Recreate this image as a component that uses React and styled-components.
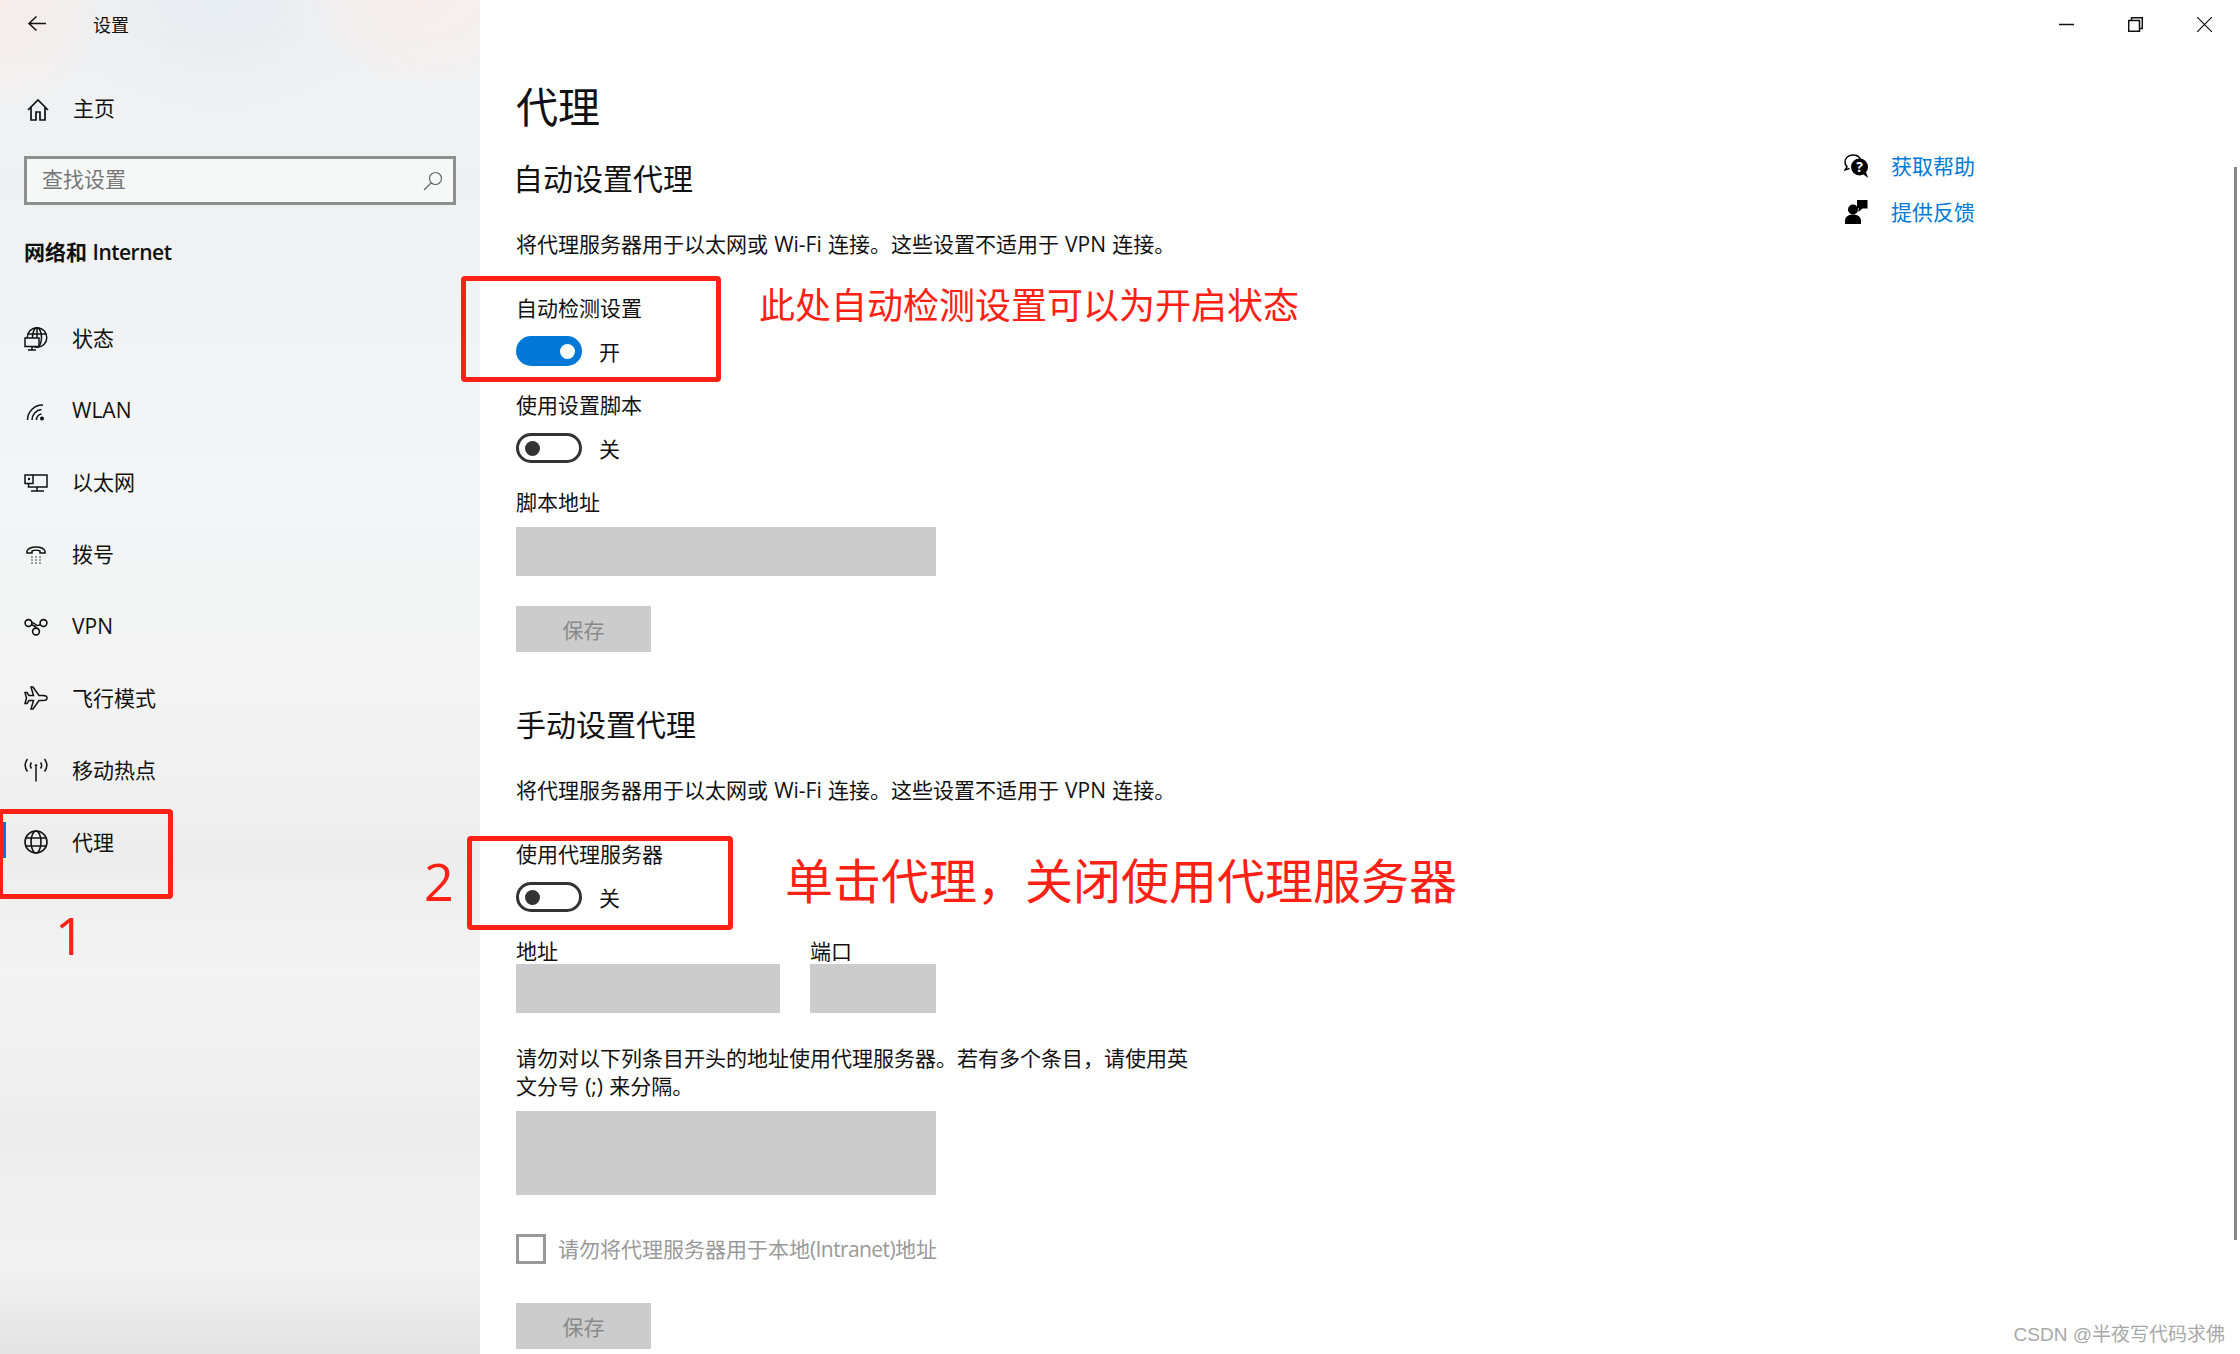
import styled, { createGlobalStyle } from "styled-components";

const GlobalStyle = createGlobalStyle`
  html, body {
    margin: 0;
    padding: 0;
    background: #fff;
  }
  * {
    box-sizing: border-box;
  }
  body {
    font-family: "Open Sans", "Noto Sans CJK SC", sans-serif;
    color: #111;
  }
`;

const Page = styled.div`
  position: relative;
  display: flex;
  width: 2240px;
  height: 1354px;
  overflow: hidden;
`;

const Sidebar = styled.aside`
  width: 480px;
  flex-shrink: 0;
  background:
    radial-gradient(130px 110px at 0 0, rgba(250, 232, 226, 0.55), transparent),
    radial-gradient(140px 90px at 420px 0, rgba(252, 232, 226, 0.5), transparent),
    radial-gradient(220px 130px at 220px 0, rgba(226, 234, 240, 0.6), transparent),
    linear-gradient(
      #f1f2f3 0,
      #eff0f1 190px,
      #f4f5f6 480px,
      #f3f3f3 700px,
      #ededed 860px,
      #f3f3f3 970px,
      #ededed 1130px,
      #f1f1f1 1270px,
      #e3e3e3 1354px
    );
`;

const Lifted = styled.span`
  margin-top: -${(p) => p.$by}px;
`;

const TitleBar = styled.div`
  display: flex;
  align-items: center;
  height: 48px;
  padding-left: 27px;
  font-size: 18px;
  svg {
    margin-right: 46px;
  }
`;

const HomeRow = styled.div`
  display: flex;
  align-items: center;
  height: 48px;
  margin-top: 38px;
  padding-left: 27px;
  font-size: 21px;
  svg {
    margin-right: 24px;
  }
`;

const SearchBox = styled.div`
  display: flex;
  align-items: center;
  justify-content: space-between;
  width: 432px;
  height: 49px;
  margin: 22px 0 0 24px;
  padding: 0 10px 0 15px;
  border: 3px solid #8f8f8f;
  background: rgba(255, 255, 255, 0.45);
  font-size: 21px;
  color: #777;
`;

const GroupTitle = styled.div`
  height: 30px;
  margin: 32px 0 36px 24px;
  font-size: 21px;
  line-height: 30px;
  font-weight: 700;
`;

const LatinWord = styled.span`
  font-weight: ${(p) => p.$weight || 400};
  letter-spacing: ${(p) => p.$track}px;
`;

const NavList = styled.nav`
  display: flex;
  flex-direction: column;
`;

const NavRow = styled.div`
  position: relative;
  display: flex;
  align-items: center;
  height: 71.9px;
  font-size: 21px;
  &::before {
    content: "";
    display: ${(p) => (p.$active ? "block" : "none")};
    position: absolute;
    left: 3px;
    top: 16px;
    width: 3px;
    height: 36px;
    background: #0078d7;
  }
`;

const NavIcon = styled.span`
  display: flex;
  justify-content: center;
  width: 24px;
  margin: 0 24px;
`;

const Main = styled.main`
  flex: 1;
  display: flex;
  flex-direction: column;
  background: #fff;
`;

const WindowBar = styled.div`
  display: flex;
  align-items: center;
  justify-content: flex-end;
  gap: 54px;
  height: 48px;
  padding-right: 28px;
`;

const Body = styled.div`
  display: flex;
  padding-left: 36px;
`;

const Content = styled.div`
  width: 1328px;
`;

const PageTitle = styled.h1`
  margin: 31px 0 0;
  font-size: 42px;
  line-height: 56px;
  font-weight: 400;
`;

const SectionTitle = styled.h2`
  margin: ${(p) => p.$top}px 0 0 ${(p) => p.$left || 0}px;
  font-size: 30px;
  line-height: 40px;
  font-weight: 400;
`;

const Text = styled.p`
  margin: ${(p) => p.$top}px 0 0;
  width: 685px;
  font-size: 21px;
  line-height: 28px;
  word-spacing: 0.7px;
`;

const ToggleRow = styled.div`
  display: flex;
  align-items: center;
  gap: 17px;
  height: 30px;
  margin-top: ${(p) => p.$top}px;
  font-size: 21px;
`;

const Toggle = styled.span`
  display: flex;
  align-items: center;
  justify-content: ${(p) => (p.$on ? "flex-end" : "flex-start")};
  width: 66px;
  height: 30px;
  padding: 0 ${(p) => (p.$on ? 7 : 6)}px;
  border: ${(p) => (p.$on ? "0" : "3px solid #333")};
  border-radius: 15px;
  background: ${(p) => (p.$on ? "#0078d7" : "#fff")};
`;

const Thumb = styled.span`
  width: 15px;
  height: 15px;
  border-radius: 50%;
  background: ${(p) => (p.$on ? "#fff" : "#333")};
`;

const Input = styled.div`
  width: ${(p) => p.$w}px;
  height: ${(p) => p.$h}px;
  margin-top: ${(p) => p.$top}px;
  background: #ccc;
`;

const SaveButton = styled.button`
  display: block;
  width: 135px;
  height: 46px;
  margin-top: ${(p) => p.$top}px;
  padding: 0;
  border: 0;
  background: #ccc;
  color: #8a8a8a;
  font: inherit;
  font-size: 21px;
`;

const FieldRow = styled.div`
  display: flex;
  gap: 30px;
  margin-top: 27px;
`;

const FieldLabel = styled.div`
  padding-bottom: 1px;
  font-size: 21px;
  line-height: 24px;
`;

const CheckRow = styled.div`
  display: flex;
  align-items: center;
  gap: 12px;
  height: 30px;
  margin-top: 39px;
  font-size: 21px;
  color: #999;
`;

const CheckBox = styled.span`
  width: 30px;
  height: 30px;
  border: 3px solid #999;
`;

const HelpLinks = styled.div`
  display: flex;
  flex-direction: column;
  margin-top: 95px;
`;

const HelpRow = styled.a`
  display: flex;
  align-items: center;
  height: 46px;
  font-size: 21px;
  color: #0078d7;
  svg {
    width: 24px;
    margin-right: 23px;
  }
`;

const RedBox = styled.div`
  position: absolute;
  left: ${(p) => p.$x}px;
  top: ${(p) => p.$y}px;
  width: ${(p) => p.$w}px;
  height: ${(p) => p.$h}px;
  border: 5px solid #ff2113;
  border-radius: 4px;
`;

const Note = styled.div`
  position: absolute;
  left: ${(p) => p.$x}px;
  top: ${(p) => p.$y}px;
  font-size: ${(p) => p.$size}px;
  line-height: 60px;
  color: #ff2113;
  white-space: nowrap;
`;

const ScrollThumb = styled.div`
  position: absolute;
  right: 3px;
  top: 167px;
  width: 3px;
  height: 1073px;
  background: #868686;
`;

const Watermark = styled.div`
  position: absolute;
  right: 15px;
  top: 1321px;
  font-family: "Liberation Sans", "Noto Sans CJK SC", sans-serif;
  font-size: 19px;
  line-height: 28px;
  color: #a8a8a8;
`;

const line = { fill: "none", stroke: "#111", strokeWidth: 1.5 };

const BackIcon = () => (
  <svg width="20" height="18" viewBox="0 0 20 18" {...line}>
    <path d="M19 8.500H2M9.500 1.500 2 8.500l7.500 7" />
  </svg>
);

const HomeIcon = () => (
  <svg width="22" height="22" viewBox="0 0 22 22" {...line} strokeWidth="1.7">
    <path d="M1 11 11 1l10 10M4 8.500V21h5v-8h4v8h5V8.500" />
  </svg>
);

const SearchIcon = () => (
  <svg width="20" height="20" viewBox="0 0 20 20" fill="none" stroke="#666" strokeWidth="1.2">
    <circle cx="12.500" cy="7.500" r="6" />
    <path d="M8 12 1 19" />
  </svg>
);

const StatusIcon = () => (
  <svg width="24" height="24" viewBox="0 0 24 24" {...line}>
    <circle cx="13" cy="10.500" r="9.800" />
    <ellipse cx="13" cy="10.500" rx="4.500" ry="9.800" />
    <path d="M3.500 7h19M13 1v10" />
    <rect x="1" y="11" width="14" height="8.500" fill="#f2f3f4" />
    <path d="M8 19.500V23M4 23h8" />
  </svg>
);

const WlanIcon = () => (
  <svg width="20" height="20" viewBox="0 0 20 20" {...line}>
    <path d="M10.500 19A6 6 0 0 1 15.500 13M6 19A10.500 10.500 0 0 1 15.500 8.500M1.500 19A15 15 0 0 1 17 4" />
    <circle cx="16" cy="17.500" r="2" fill="#111" stroke="none" />
  </svg>
);

const EthernetIcon = () => (
  <svg width="24" height="18" viewBox="0 0 24 18" {...line}>
    <path d="M9 1h14v12H4.500V9.500M13 13v4M7 17h13" />
    <rect x="1" y="1" width="8" height="8.500" />
    <circle cx="5" cy="5" r="1.200" fill="#111" stroke="none" />
  </svg>
);

const DialIcon = () => (
  <svg width="20" height="18" viewBox="0 0 20 18" {...line}>
    <path d="M1 7V5c1.500-3 5-4 9-4s7.500 1 9 4v2h-5V5C12 4 8 4 6 5v2z" />
    <path d="M5.500 11h1M9.500 11h1M13.500 11h1M5.500 14h1M9.500 14h1M13.500 14h1M5.500 17h1M9.500 17h1M13.500 17h1" />
  </svg>
);

const VpnIcon = () => (
  <svg width="24" height="18" viewBox="0 0 24 18" {...line} strokeWidth="1.6">
    <circle cx="4.500" cy="5" r="3.400" />
    <circle cx="19.500" cy="5" r="3.400" />
    <circle cx="12" cy="13.500" r="3.400" />
    <path d="M7.500 6.500c2 1 4.500 3 4.500 3.500M16.500 6.500c-2 1-4 1.500-5 0-.5-1-2-1.500-3.500-2" />
  </svg>
);

const PlaneIcon = () => (
  <svg width="24" height="24" viewBox="0 0 24 24" {...line}>
    <path d="M23 12c0-1.500-2-2.500-4-2.500h-4L9 1H7l2.500 8.500H5L3 6.500H1L2.500 12 1 17.500h2l2-3h4.500L7 23h2l6-8.500h4c2 0 4-1 4-2.500z" />
  </svg>
);

const HotspotIcon = () => (
  <svg width="24" height="24" viewBox="0 0 24 24" {...line}>
    <path d="M12 9v14.500M3.500 1C.5 5 .5 9.500 3.500 13.500M20.500 1c3 4 3 8.500 0 12.500M7.500 4.500c-1.500 2-1.500 4 0 6M16.500 4.500c1.500 2 1.500 4 0 6" />
    <circle cx="12" cy="7.500" r="1.300" fill="#111" stroke="none" />
  </svg>
);

const GlobeIcon = () => (
  <svg width="24" height="24" viewBox="0 0 24 24" {...line} strokeWidth="1.6">
    <circle cx="12" cy="12" r="11" />
    <ellipse cx="12" cy="12" rx="5" ry="11" />
    <path d="M2 8h20M2 16h20" />
  </svg>
);

const MinimizeIcon = () => (
  <svg width="15" height="15" viewBox="0 0 15 15" {...line}>
    <path d="M0 7.500h15" />
  </svg>
);

const RestoreIcon = () => (
  <svg width="15" height="15" viewBox="0 0 15 15" {...line}>
    <path d="M.7 3.500h10.800v10.800H.7zM3.500 3.500V.7h10.800v10.800h-2.800" />
  </svg>
);

const CloseIcon = () => (
  <svg width="15" height="15" viewBox="0 0 15 15" {...line} strokeWidth="1.2">
    <path d="M0 0l15 15M15 0 0 15" />
  </svg>
);

const HelpIcon = () => (
  <svg height="24" viewBox="0 0 24 24">
    <path
      d="M9 1C4.500 1 1 4 1 8c0 2 .8 3.500 2 4.800L1 16l4.500-1.500"
      fill="none"
      stroke="#000"
      strokeWidth="1.500"
    />
    <path d="M9 1c3.500 0 6 1.500 7.500 4" fill="none" stroke="#000" strokeWidth="1.500" />
    <circle cx="15.500" cy="13" r="8.500" fill="#000" />
    <path d="M19 20l5 4-2-6z" fill="#000" />
    <text x="15.500" y="18" fontSize="14" fontWeight="700" fill="#fff" textAnchor="middle">
      ?
    </text>
  </svg>
);

const FeedbackIcon = () => (
  <svg height="24" viewBox="0 0 24 24">
    <circle cx="9" cy="9.500" r="5" fill="#000" />
    <path d="M1 24v-3c0-4 3-6.500 8-6.500s8 2.500 8 6.500v3z" fill="#000" />
    <path d="M13 0h10.500v8.500h-5L14.500 12V8H13z" fill="#000" />
  </svg>
);

const navItems = [
  { label: "状态", icon: <StatusIcon />, lift: 3 },
  { label: "WLAN", icon: <WlanIcon />, lift: 1 },
  { label: "以太网", icon: <EthernetIcon />, lift: 3 },
  { label: "拨号", icon: <DialIcon />, lift: 3 },
  { label: "VPN", icon: <VpnIcon />, lift: 1 },
  { label: "飞行模式", icon: <PlaneIcon />, lift: 3 },
  { label: "移动热点", icon: <HotspotIcon />, lift: 3 },
  { label: "代理", icon: <GlobeIcon />, lift: 3, active: true },
];

const NOTICE = "将代理服务器用于以太网或 Wi-Fi 连接。这些设置不适用于 VPN 连接。";

const App = () => {
  return (
    <Page>
      <GlobalStyle />
      <Sidebar>
        <TitleBar>
          <BackIcon />
          设置
        </TitleBar>
        <HomeRow>
          <HomeIcon />
          <Lifted $by={6}>主页</Lifted>
        </HomeRow>
        <SearchBox>
          <Lifted $by={6}>查找设置</Lifted>
          <SearchIcon />
        </SearchBox>
        <GroupTitle>
          网络和{" "}
          <LatinWord $weight={600} $track={-0.5}>
            Internet
          </LatinWord>
        </GroupTitle>
        <NavList>
          {navItems.map((item) => (
            <NavRow key={item.label} $active={item.active}>
              <NavIcon>{item.icon}</NavIcon>
              <Lifted $by={item.lift}>{item.label}</Lifted>
            </NavRow>
          ))}
        </NavList>
      </Sidebar>
      <Main>
        <WindowBar>
          <MinimizeIcon />
          <RestoreIcon />
          <CloseIcon />
        </WindowBar>
        <Body>
          <Content>
            <PageTitle>代理</PageTitle>
            <SectionTitle $top={24} $left={-3}>
              自动设置代理
            </SectionTitle>
            <Text $top={31}>{NOTICE}</Text>
            <Text $top={36}>自动检测设置</Text>
            <ToggleRow $top={14}>
              <Toggle $on>
                <Thumb $on />
              </Toggle>
              开
            </ToggleRow>
            <Text $top={25}>使用设置脚本</Text>
            <ToggleRow $top={14}>
              <Toggle>
                <Thumb />
              </Toggle>
              关
            </ToggleRow>
            <Text $top={25}>脚本地址</Text>
            <Input $w={420} $h={49} $top={11} />
            <SaveButton $top={30}>保存</SaveButton>
            <SectionTitle $top={53}>手动设置代理</SectionTitle>
            <Text $top={31}>{NOTICE}</Text>
            <Text $top={36}>使用代理服务器</Text>
            <ToggleRow $top={14}>
              <Toggle>
                <Thumb />
              </Toggle>
              关
            </ToggleRow>
            <FieldRow>
              <div>
                <FieldLabel>地址</FieldLabel>
                <Input $w={264} $h={49} $top={0} />
              </div>
              <div>
                <FieldLabel>端口</FieldLabel>
                <Input $w={126} $h={49} $top={0} />
              </div>
            </FieldRow>
            <Text $top={31}>
              请勿对以下列条目开头的地址使用代理服务器。若有多个条目，请使用英文分号 (;) 来分隔。
            </Text>
            <Input $w={420} $h={84} $top={11} />
            <CheckRow>
              <CheckBox />
              <Lifted $by={2}>
                请勿将代理服务器用于本地
                <LatinWord $track={-0.6}>(Intranet)</LatinWord>
                地址
              </Lifted>
            </CheckRow>
            <SaveButton $top={39}>保存</SaveButton>
          </Content>
          <HelpLinks>
            <HelpRow>
              <HelpIcon />
              <Lifted $by={2}>获取帮助</Lifted>
            </HelpRow>
            <HelpRow>
              <FeedbackIcon />
              <Lifted $by={2}>提供反馈</Lifted>
            </HelpRow>
          </HelpLinks>
        </Body>
      </Main>
      <RedBox $x={-2} $y={809} $w={175} $h={90} />
      <RedBox $x={461} $y={276} $w={260} $h={106} />
      <RedBox $x={467} $y={836} $w={266} $h={94} />
      <Note $x={759} $y={276} $size={36}>
        此处自动检测设置可以为开启状态
      </Note>
      <Note $x={785} $y={851} $size={48}>
        单击代理，关闭使用代理服务器
      </Note>
      <Note $x={55} $y={905} $size={52}>
        1
      </Note>
      <Note $x={424} $y={851} $size={52}>
        2
      </Note>
      <ScrollThumb />
      <Watermark>CSDN @半夜写代码求佛</Watermark>
    </Page>
  );
};

export default App;
